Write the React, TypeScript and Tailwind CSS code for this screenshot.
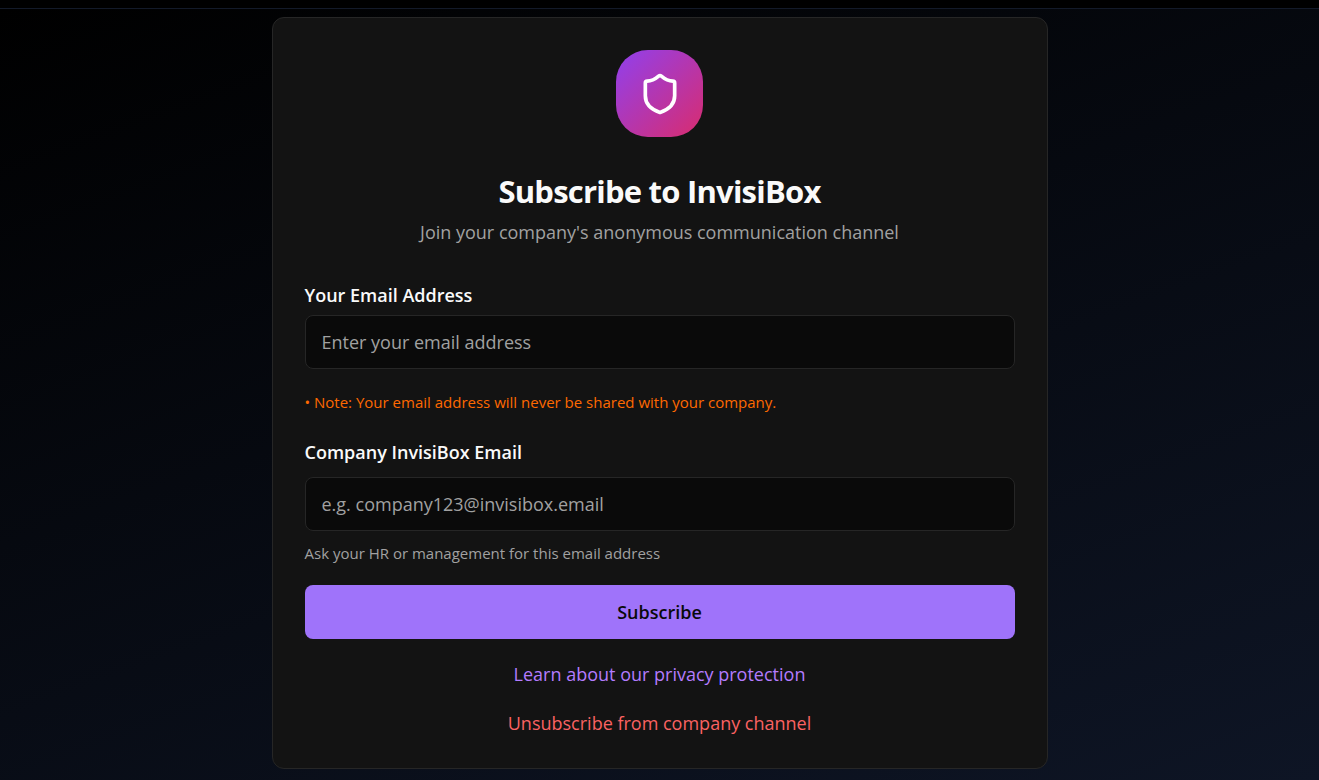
import { Shield } from "lucide-react";

const inputClass =
  "h-[54px] w-full rounded-lg border border-[#262626] bg-[#0a0a0a] px-4 text-lg text-white placeholder:text-[#a1a1a1] outline-none focus:border-[#9f73fa]";

const labelClass = "text-lg leading-6 font-semibold text-[#fafafa]";

const SubscribeForm = () => {
  return (
    <form className="flex flex-col" onSubmit={(e) => e.preventDefault()}>
      <label htmlFor="email" className={labelClass}>
        Your Email Address
      </label>
      <input
        id="email"
        type="email"
        placeholder="Enter your email address"
        className={`mt-2 ${inputClass}`}
      />
      <p className="mt-[21px] text-[15px] leading-6 text-[#ff6900]">
        • Note: Your email address will never be shared with your company.
      </p>

      <label htmlFor="company" className={`mt-[26px] ${labelClass}`}>
        Company InvisiBox Email
      </label>
      <input
        id="company"
        type="email"
        placeholder="e.g. company123@invisibox.email"
        className={`mt-[13px] ${inputClass}`}
      />
      <p className="mt-[10px] text-[15px] leading-6 text-[#a1a1a1]">
        Ask your HR or management for this email address
      </p>

      <button
        type="submit"
        className="mt-5 h-[54px] rounded-lg bg-[#9f73fa] text-lg font-semibold text-[#0a0a0a]"
      >
        Subscribe
      </button>
    </form>
  );
};

export default function App() {
  return (
    <div className="flex min-h-screen flex-col bg-black font-['Open_Sans','Noto_Sans',sans-serif]">
      <header className="h-[9px] border-b border-[#131a29] bg-black" />

      <main className="flex-1 bg-linear-[160deg,#000000,#0e1525] px-4 py-2">
        <section className="mx-auto max-w-[776px] rounded-xl border border-[#262626] bg-[#131313] p-8">
          <div className="flex flex-col items-center text-center">
            <div className="flex size-[87px] items-center justify-center rounded-[32px] bg-linear-to-br/srgb from-[#9040ee] to-[#d92c6e]">
              <Shield className="size-11 text-white" />
            </div>
            <h1 className="mt-8 text-[31px] leading-11 font-bold tracking-tight text-[#fafafa]">
              Subscribe to InvisiBox
            </h1>
            <p className="mt-1 text-lg leading-[30px] text-[#a1a1a1]">
              Join your company's anonymous communication channel
            </p>
          </div>

          <div className="mt-9">
            <SubscribeForm />
          </div>

          <div className="mt-[22px] flex flex-col items-center gap-[23px] text-lg leading-[26px]">
            <a href="#privacy" className="text-[#b37cff]">
              Learn about our privacy protection
            </a>
            <a href="#unsubscribe" className="text-[#fa6262]">
              Unsubscribe from company channel
            </a>
          </div>
        </section>
      </main>
    </div>
  );
}
